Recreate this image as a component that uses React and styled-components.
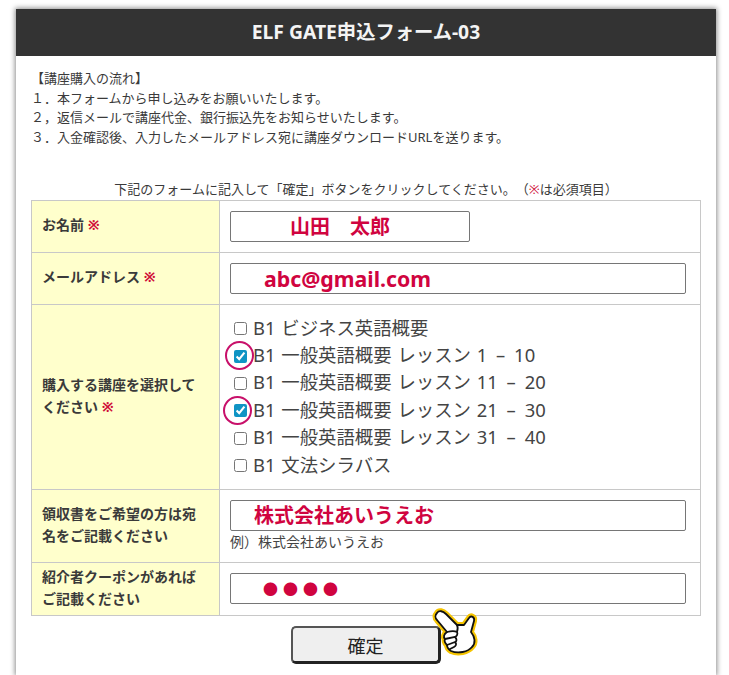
import styled, { createGlobalStyle } from "styled-components";

const GlobalStyle = createGlobalStyle`
  body {
    margin: 0;
    background: #fff;
    font-family: "Noto Sans", "Noto Sans CJK JP", sans-serif;
    color: #333;
    text-spacing-trim: space-all;
  }
  html, body { overflow: hidden; height: 675px; }
`;

const Panel = styled.div`
  width: 700px;
  height: 666px;
  margin: 9px 0 0 16px;
  background: #fff;
  box-shadow: 0 0 5px 1px rgba(0, 0, 0, 0.45);
`;
const Header = styled.h1`
  margin: 0;
  height: 47px;
  line-height: 46px;
  background: #333;
  color: #f4f4f4;
  font-size: 19.3px;
  font-weight: 700;
  text-align: center;
`;
const Body = styled.div`
  padding: 13px 15px 0;
`;
const Flow = styled.div`
  font-size: 13px;
  line-height: 19.7px;
  height: 112px;
  color: #3a3a3a;
`;
const Note = styled.p`
  margin: 0;
  height: 19px;
  line-height: 17px;
  font-size: 13px;
  text-align: center;
  color: #3a3a3a;
`;
const Mark = styled.span`
  color: #d0103a;
`;
const Table = styled.div`
  display: grid;
  grid-template-columns: 188px 481px;
  width: 670px;
  border-top: 1px solid #c8c8c8;
  border-left: 1px solid #c8c8c8;
  box-sizing: border-box;
`;
const Label = styled.div`
  display: flex;
  align-items: center;
  box-sizing: border-box;
  height: ${(p) => p.$h}px;
  padding: 0 10px 3px;
  background: #ffffcc;
  border-right: 1px solid #c8c8c8;
  border-bottom: 1px solid #c8c8c8;
  font-size: 14px;
  font-weight: 700;
  line-height: 22px;
  color: #3a3a3a;
`;
const Cell = styled.div`
  box-sizing: border-box;
  height: ${(p) => p.$h}px;
  padding: ${(p) => p.$top ?? 10}px 14px 0 10px;
  border-right: 1px solid #c8c8c8;
  border-bottom: 1px solid #c8c8c8;
`;
const TextInput = styled.input`
  display: block;
  box-sizing: border-box;
  width: ${(p) => p.$w}px;
  height: 31px;
  padding: 0 0 ${(p) => p.$lift ?? 0}px ${(p) => p.$pad}px;
  border: 1px solid #767676;
  border-radius: 2px;
  background: #fff;
  color: #d0043f;
  font-family: inherit;
  font-size: ${(p) => p.$size}px;
  font-weight: 700;
  letter-spacing: ${(p) => p.$track ?? 0}px;
  outline: none;
`;
const Example = styled.div`
  font-size: 14px;
  line-height: 19px;
  margin-top: 1px;
  color: #444;
`;
const Courses = styled.div`
  display: flex;
  flex-direction: column;
`;
const Course = styled.label`
  position: relative;
  display: flex;
  align-items: center;
  height: 27.4px;
  font-size: 18.4px;
  word-spacing: 1px;
  color: #444;
  white-space: pre;
`;
const Box = styled.input`
  width: 13px;
  height: 13px;
  margin: 4px 6px 0 4px;
  accent-color: #0f94c4;
`;
const Ring = styled.span`
  position: absolute;
  left: ${(p) => p.$x}px;
  top: 1px;
  width: 29px;
  height: 29px;
  box-sizing: border-box;
  border: 2.5px solid #c8106a;
  border-radius: 50%;
`;
const Footer = styled.div`
  position: relative;
  display: flex;
  justify-content: center;
  padding-top: 10px;
`;
const Submit = styled.button`
  box-sizing: border-box;
  width: 150px;
  height: 38px;
  border: 2px solid #555;
  border-bottom: 3px solid #222;
  border-right: 3px solid #222;
  border-radius: 5px;
  background: #efefef;
  color: #222;
  font-family: inherit;
  font-size: 18px;
`;
const Hand = styled.svg`
  position: absolute;
  left: 397px;
  top: -12px;
`;

const courses = [
  { name: "B1 ビジネス英語概要" },
  { name: "B1 一般英語概要 レッスン 1 \u2009–\u2009 10", ring: -5 },
  { name: "B1 一般英語概要 レッスン 11 \u2009–\u2009 20" },
  { name: "B1 一般英語概要 レッスン 21 \u2009–\u2009 30", ring: -7 },
  { name: "B1 一般英語概要 レッスン 31 \u2009–\u2009 40" },
  { name: "B1 文法シラバス" },
];

function PointingHand() {
  const shape =
    "M9 9 C11 6 15 7 18 10 L29 21 L36 21 L41 14 C43 11 47 13 46 17 L43 28 C47 33 48 39 44 43 C40 48 30 50 23 47 C20 45 19 43 19 41 C17 39 16 37 17 35 C15 33 16 30 19 28 L9 16 C7 14 7 11 9 9 Z";
  return (
    <Hand width="56" height="56" viewBox="0 0 56 56">
      <path d={shape} fill="#f5c400" stroke="#f5c400" strokeWidth="6" strokeLinejoin="round" />
      <path d={shape} fill="#fff" stroke="#111" strokeWidth="1.8" strokeLinejoin="round" />
      <path
        d="M19 28 C23 27 27 27 29 28 C30 30 29 32 27 33 L17 35 M27 33 C29 35 29 37 27 38 L19 41 M27 38 C29 40 28 42 26 43 L22 45 M29 21 C30 23 30 25 29 28"
        fill="none"
        stroke="#111"
        strokeWidth="1.8"
        strokeLinecap="round"
      />
    </Hand>
  );
}

export default function App() {
  return (
    <>
      <GlobalStyle />
      <Panel>
        <Header>ELF GATE申込フォーム-03</Header>
        <Body>
          <Flow>
            【講座購入の流れ】
            <br />
            １．本フォームから申し込みをお願いいたします。
            <br />
            ２，返信メールで講座代金、銀行振込先をお知らせいたします。
            <br />
            ３．入金確認後、入力したメールアドレス宛に講座ダウンロードURLを送ります。
          </Flow>
          <Note>
            下記のフォームに記入して「確定」ボタンをクリックしてください。（<Mark>※</Mark>は必須項目）
          </Note>
          <Table>
            <Label $h={52}>
              <span>
                お名前 <Mark>※</Mark>
              </span>
            </Label>
            <Cell $h={52}>
              <TextInput $w={240} $pad={59} $size={20} $lift={3} readOnly value="山田　太郎" />
            </Cell>
            <Label $h={52}>
              <span>
                メールアドレス <Mark>※</Mark>
              </span>
            </Label>
            <Cell $h={52}>
              <TextInput $w={456} $pad={33} $size={21.3} readOnly value="abc@gmail.com" />
            </Cell>
            <Label $h={185}>
              <span>
                購入する講座を選択してください <Mark>※</Mark>
              </span>
            </Label>
            <Cell $h={185} $top={8}>
              <Courses>
                {courses.map(({ name, ring }) => (
                  <Course key={name}>
                    <Box type="checkbox" checked={ring !== undefined} readOnly />
                    {name}
                    {ring !== undefined && <Ring $x={ring} />}
                  </Course>
                ))}
              </Courses>
            </Cell>
            <Label $h={73}>
              <span>領収書をご希望の方は宛名をご記載ください</span>
            </Label>
            <Cell $h={73}>
              <TextInput $w={456} $pad={23} $size={20} $lift={2} readOnly value="株式会社あいうえお" />
              <Example>例）株式会社あいうえお</Example>
            </Cell>
            <Label $h={53}>
              <span>紹介者クーポンがあればご記載ください</span>
            </Label>
            <Cell $h={53}>
              <TextInput $w={456} $pad={32} $size={15} $track={5} readOnly value="●●●●" />
            </Cell>
          </Table>
          <Footer>
            <Submit type="button">確定</Submit>
            <PointingHand />
          </Footer>
        </Body>
      </Panel>
    </>
  );
}
